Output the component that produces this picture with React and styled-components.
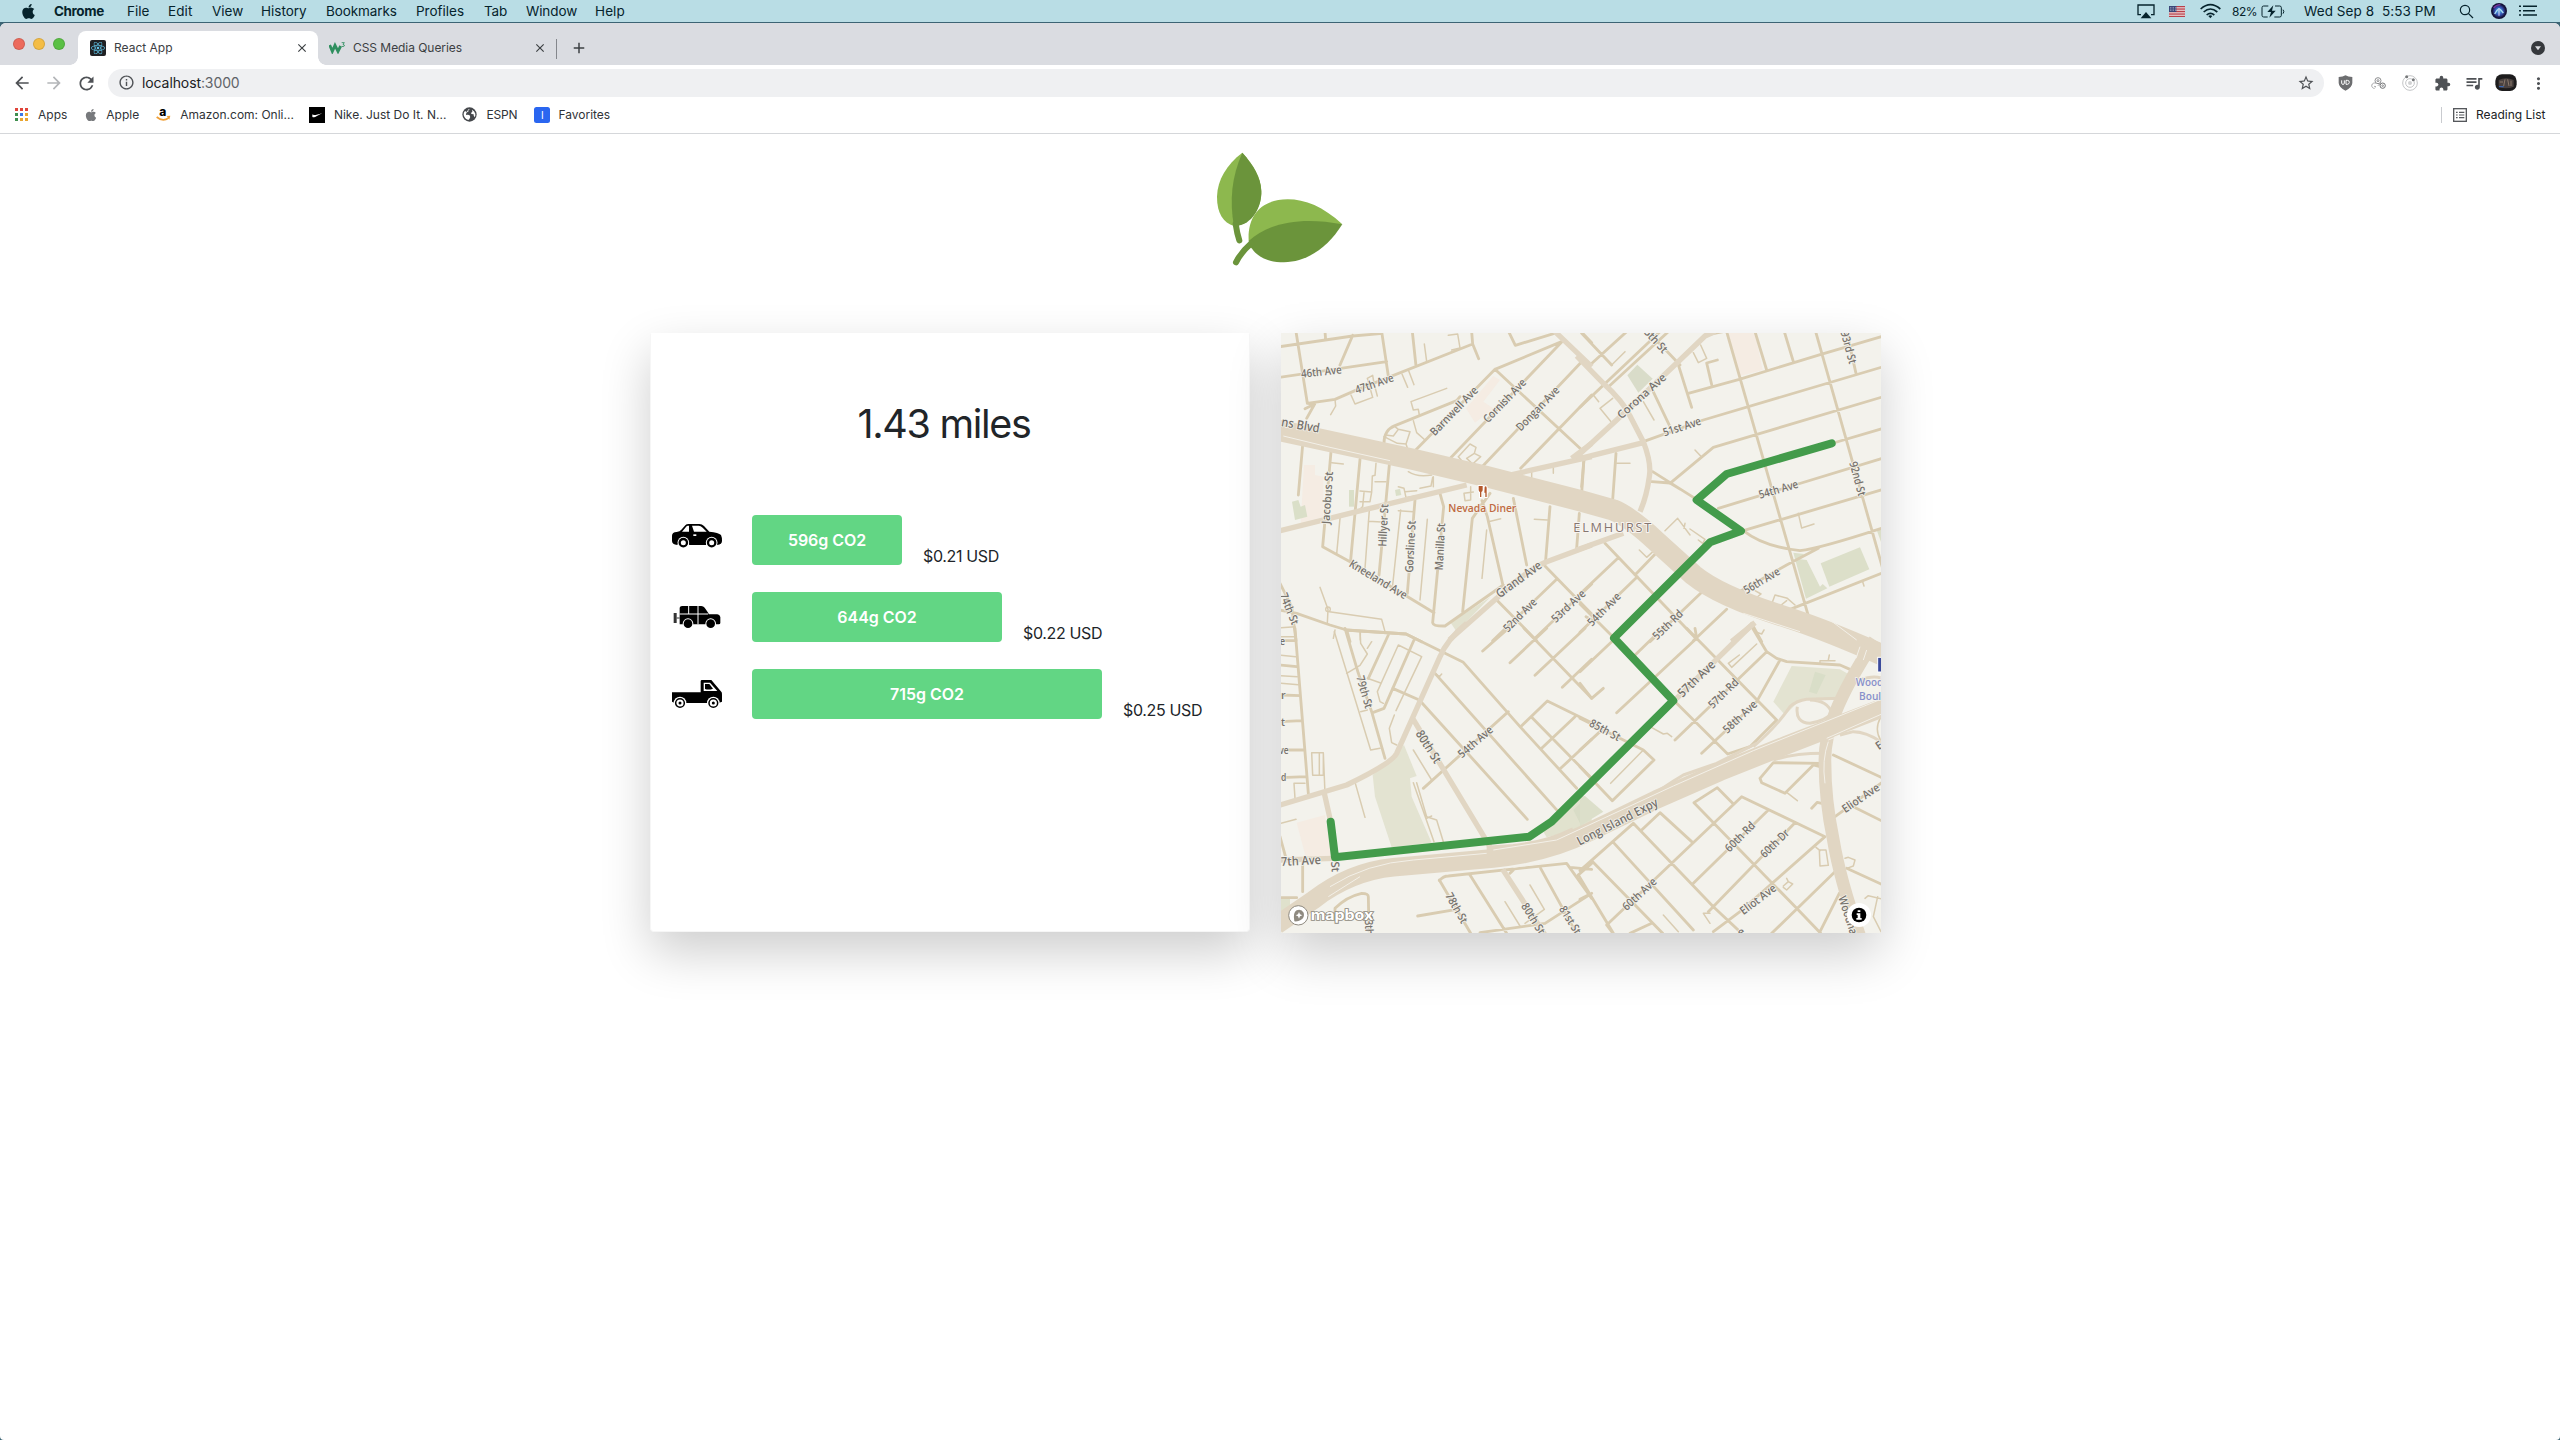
import React from "react";
import styled, { createGlobalStyle } from "styled-components";
import { FaApple, FaReact } from "react-icons/fa";
import {
  MdArrowBack, MdArrowForward, MdRefresh, MdInfoOutline, MdStarBorder,
  MdExtension, MdQueueMusic, MdMoreVert, MdClose, MdAdd,
} from "react-icons/md";

const Global = createGlobalStyle`
  * { box-sizing: border-box; }
  html, body { margin: 0; padding: 0; background: #3c6474; overflow: hidden; }
  body { font-family: Inter, Roboto, "Liberation Sans", sans-serif; color: #212529; }
  svg { display: block; flex: none; }
`;

const Screen = styled.div`
  width: 2560px;
  height: 1440px;
  display: flex;
  flex-direction: column;
`;

/* ---------- system menu bar ---------- */
const MenuBar = styled.header`
  height: 22px;
  margin-bottom: 1px;
  padding: 0 23px 0 21px;
  display: flex;
  align-items: center;
  background: #b9dde5;
  color: #06232c;
  font-size: 13.5px;
`;

const Word = styled.span`
  flex: none;
  min-width: ${(p) => p.$w}px;
  margin-left: ${(p) => p.$gap ?? 0}px;
  margin-right: ${(p) => p.$mr ?? 0}px;
  letter-spacing: ${(p) => p.$ls ?? 0}px;
  font-weight: ${(p) => p.$weight ?? 400};
  font-size: ${(p) => (p.$size ? p.$size + "px" : "inherit")};
  color: ${(p) => p.$color ?? "inherit"};
  white-space: pre;
`;

const MenuWord = styled(Word)`
  width: ${(p) => p.$w}px;
`;

const Slot = styled.span`
  flex: none;
  width: ${(p) => p.$w}px;
  margin-left: ${(p) => p.$gap ?? 0}px;
  display: flex;
  align-items: center;
  justify-content: center;
  color: ${(p) => p.$color ?? "inherit"};
`;

const Spacer = styled.div`
  flex: 1;
`;

/* ---------- browser window ---------- */
const Window = styled.div`
  flex: 1;
  min-height: 0;
  display: flex;
  flex-direction: column;
  background: #fff;
  border-radius: 6px 6px 4px 4px;
  overflow: hidden;
`;

const TabStrip = styled.div`
  height: 42px;
  padding: 8px 15px 0 13px;
  display: flex;
  background: #dadce1;
  color: #3c4043;
  font-size: 12px;
`;

const Lights = styled.div`
  width: 65px;
  height: 26px;
  display: flex;
  gap: 8px;
  align-items: center;
`;

const Light = styled.span`
  width: 12px;
  height: 12px;
  border-radius: 50%;
  background: ${(p) => p.$c};
  border: 1px solid rgba(0, 0, 0, 0.12);
`;

const Tab = styled.div`
  position: relative;
  width: ${(p) => p.$w}px;
  height: 34px;
  padding: 0 9px 1px ${(p) => p.$pl}px;
  display: flex;
  align-items: center;
  border-radius: 8px 8px 0 0;
  background: ${(p) => (p.$active ? "#fff" : "transparent")};
  &::before,
  &::after {
    content: ${(p) => (p.$active ? '""' : "none")};
    position: absolute;
    bottom: 0;
    width: 8px;
    height: 8px;
  }
  &::before {
    left: -8px;
    background: radial-gradient(circle at 0 0, transparent 7.5px, #fff 8px);
  }
  &::after {
    right: -8px;
    background: radial-gradient(circle at 100% 0, transparent 7.5px, #fff 8px);
  }
`;

const TabDivider = styled.span`
  width: 1px;
  height: 20px;
  margin: 8px 13px 0 0;
  background: #84878c;
`;

const StripButton = styled.span`
  height: 34px;
  display: flex;
  align-items: center;
`;

const Toolbar = styled.div`
  height: 36px;
  padding: 0 14px 0 13px;
  display: flex;
  align-items: center;
  color: #4f5256;
`;

const AddressBar = styled.div`
  width: 2216px;
  height: 28px;
  margin-left: 13px;
  padding: 0 9px 1px 10px;
  display: flex;
  align-items: center;
  border-radius: 14px;
  background: #eff0f2;
`;

const Bookmarks = styled.div`
  height: 33px;
  padding: 0 14px 5px 15px;
  display: flex;
  align-items: center;
  border-bottom: 1px solid #d5d7da;
  font-size: 12px;
  color: #303337;
`;

const BarDivider = styled.span`
  width: 1px;
  height: 16px;
  background: #c9cbcf;
`;

const Tile = styled.span`
  width: 16px;
  height: 16px;
  display: flex;
  align-items: center;
  justify-content: center;
  border-radius: ${(p) => p.$r ?? 0}px;
  background: ${(p) => p.$bg};
  color: ${(p) => p.$fg ?? "#fff"};
  font-size: 10px;
`;

/* ---------- page ---------- */
const Page = styled.main`
  flex: 1;
  display: flex;
  flex-direction: column;
`;

const Brand = styled.div`
  height: 199px;
  display: flex;
  justify-content: center;
`;

const Panels = styled.div`
  display: flex;
  align-items: flex-start;
  padding-left: 650px;
  gap: 31px;
`;

const Card = styled.section`
  width: 600px;
  height: 599px;
  padding-top: 62px;
  border: 1px solid #f6f6f6;
  border-top-color: #fff;
  border-radius: 2px 2px 4px 4px;
  background: #fff;
  box-shadow: 0 20px 50px rgba(0, 0, 0, 0.2);
`;

const MapCard = styled.section`
  width: 600px;
  height: 600px;
  background: #f3f2ec;
  box-shadow: 0 20px 50px rgba(0, 0, 0, 0.2);
`;

const Distance = styled.h1`
  margin: 0 0 62px;
  padding-right: 12px;
  font-size: 39.5px;
  font-weight: 400;
  line-height: 56px;
  letter-spacing: -1.3px;
  text-align: center;
  height: 57px;
`;

const Emission = styled.div`
  height: 50px;
  margin: 0 0 27px 21px;
  display: flex;
`;

const Bar = styled.div`
  width: ${(p) => p.$w}px;
  margin: 0 21px 0 30px;
  border-radius: 4px;
  background: #62d684;
  color: #fff;
  font-size: 16px;
  font-weight: 600;
  letter-spacing: -0.05px;
  line-height: 50px;
  text-align: center;
`;

const Price = styled.div`
  align-self: flex-end;
  font-size: 16px;
  line-height: 18px;
  letter-spacing: -0.35px;
  white-space: nowrap;
`;

/* ---------- drawings ---------- */
const Leaves = () => (
  <svg width="180" height="146" viewBox="0 12 540 438">
    <path d="M157 68C110 103 82 150 81 200C81 250 100 278 132 288C190 275 215 230 214 183C212 140 190 105 157 68Z" fill="#8db84e" />
    <path d="M157 68C190 105 212 140 214 183C215 230 190 275 150 286L132 290C118 210 125 140 157 68Z" fill="#6b943b" />
    <path d="M137 282Q141 310 148 331" stroke="#6b943b" strokeWidth="18" strokeLinecap="round" fill="none" />
    <path d="M457 283C400 230 345 208 293 208C215 208 172 255 176 332L184 355C250 330 350 310 457 283Z" fill="#8db84e" />
    <path d="M457 283C340 260 240 275 176 333L184 353C205 385 240 397 282 397C355 395 415 350 457 283Z" fill="#6b943b" />
    <path d="M138 397Q152 368 184 340" stroke="#6b943b" strokeWidth="18" strokeLinecap="round" fill="none" />
  </svg>
);

const Car = () => (
  <svg width="50" height="50" viewBox="0 0 150 150">
    <path d="M0 62Q0 52 14 51Q24 50 28 44L40 31Q43 27 50 27H82Q90 27 96 33L112 50Q140 52 147 60Q150 66 150 78Q150 88 136 90A19 19 0 0 0 102 90H52A19 19 0 0 0 16 90Q0 88 0 78Z" />
    <path d="M51 32H47Q44 32 40 38L30 50H51ZM60 32H80Q86 32 92 38L104 50H66Z" fill="#fff" />
    <rect x="64" y="58" width="9" height="5" fill="#fff" />
    {[34, 119].map((x) => (
      <g key={x}>
        <circle cx={x} cy="83" r="17.500" fill="#fff" />
        <circle cx={x} cy="83" r="14.500" />
        <circle cx={x} cy="83" r="7.500" fill="#fff" />
      </g>
    ))}
  </svg>
);

const Suv = () => (
  <svg width="50" height="50" viewBox="0 0 150 150">
    <path d="M23 47Q24 42 30 42H88Q94 42 98 47L109 63L110 67H136Q143 68 145 75V93Q145 97 140 97H130A16 16 0 0 0 102 97H62A16 16 0 0 0 34 97H23Z" />
    <rect x="5" y="63" width="9" height="30" fill="#333" />
    <path d="M14 78H23" stroke="#333" strokeWidth="3" />
    <path d="M23 66H108M50 42V66M78 42V97" stroke="#fff" strokeWidth="3" />
    {[48, 116].map((x) => (
      <g key={x}>
        <circle cx={x} cy="95" r="16" fill="#fff" />
        <circle cx={x} cy="95" r="13" />
      </g>
    ))}
  </svg>
);

const Truck = () => (
  <svg width="50" height="50" viewBox="0 0 150 150">
    <path d="M0 70H86V37Q86 33 90 33H118L149 70Q150 72 150 78V98L140 102H8L0 98Z" />
    <path d="M95 41H114L136 66H95Z" fill="#fff" />
    <path d="M99 45H112L123 59Q110 64 99 60Z" />
    {[24, 124].map((x) => (
      <g key={x}>
        <circle cx={x} cy="102" r="19" fill="#fff" />
        <circle cx={x} cy="102" r="13" fill="#fff" stroke="#000" strokeWidth="4.500" />
        <circle cx={x} cy="102" r="4.500" />
      </g>
    ))}
  </svg>
);

const Airplay = () => (
  <svg width="18" height="15" viewBox="0 0 54 45" fill="none" stroke="#06232c" strokeWidth="4">
    <path d="M12 32H3V3H51V32H42" />
    <path d="M27 24L43 43H11Z" fill="#06232c" stroke="none" />
  </svg>
);

const Flag = () => (
  <svg width="16" height="11" viewBox="0 0 48 33">
    <rect width="48" height="33" fill="#f4f0f0" />
    {[0, 1, 2, 3, 4, 5, 6].map((i) => <rect key={i} y={i * 5} width="48" height="2.8" fill="#b4343f" />)}
    <rect width="22" height="18" fill="#3a4678" />
    {[4, 9, 14].map((y) => [4, 9, 14, 19].map((x) => <circle key={x + "-" + y} cx={x} cy={y} r="1.2" fill="#fff" />))}
  </svg>
);

const Wifi = () => (
  <svg width="21" height="16" viewBox="0 0 63 48" fill="none" stroke="#06232c" strokeWidth="5">
    <path d="M2 18Q31 -8 61 18M11 27Q31 9 52 27M20 36Q31 26 43 36" />
    <path d="M31 46L25 39Q31 34 37 39Z" fill="#06232c" stroke="none" />
  </svg>
);

const Battery = () => (
  <svg width="24" height="13" viewBox="0 0 72 39" fill="none" stroke="#06232c" strokeWidth="3">
    <path d="M22 3H8Q3 3 3 8V31Q3 36 8 36H20M42 3H56Q61 3 61 8V31Q61 36 56 36H40M66 14Q71 20 66 26" />
    <path d="M37 1L19 21H30L25 38L44 17H33Z" fill="#06232c" stroke="none" />
  </svg>
);

const Search = () => (
  <svg width="15" height="15" viewBox="0 0 45 45" fill="none" stroke="#06232c" strokeWidth="3.6">
    <circle cx="18" cy="18" r="14" />
    <path d="M28 28L42 42" />
  </svg>
);

const Siri = () => (
  <svg width="16" height="16" viewBox="0 0 48 48">
    <defs>
      <radialGradient id="siri">
        <stop offset="0" stopColor="#4fc4ea" />
        <stop offset=".5" stopColor="#3550b4" />
        <stop offset=".85" stopColor="#141238" />
      </radialGradient>
    </defs>
    <circle cx="24" cy="24" r="24" fill="url(#siri)" />
    <path d="M11 33Q18 20 24 17Q30 20 37 30" stroke="#a9def2" strokeWidth="4" fill="none" />
    <path d="M24 18V38" stroke="#c9c0ea" strokeWidth="3.500" />
    <path d="M8 15Q16 5 28 5" stroke="#7c35a0" strokeWidth="4" fill="none" />
  </svg>
);

const ListGlyph = () => (
  <svg width="18" height="12" viewBox="0 0 54 36" stroke="#06232c" strokeWidth="4.5">
    <path d="M12 4H54M12 17H48M12 30H54M0 4H6M0 17H6M0 30H6" />
  </svg>
);

const W3 = () => (
  <svg width="16" height="12" viewBox="0 0 48 36" fill="none">
    <path d="M2 9L10 28L18 10L27 28L35 12" stroke="#2f8f5f" strokeWidth="8.500" />
    <path d="M38 2H46L42 7Q47 8 46 12Q43 15 38 13" stroke="#2f8f5f" strokeWidth="2.6" />
  </svg>
);

const AppsGrid = () => (
  <svg width="13" height="13" viewBox="0 0 39 39">
    {["#e0443a", "#e0443a", "#e0443a", "#3f8f4f", "#3b78e7", "#e9a52f", "#3f8f4f", "#e9a52f", "#e9a52f"].map((c, i) => (
      <rect key={i} x={(i % 3) * 15} y={Math.floor(i / 3) * 15} width="9" height="9" fill={c} />
    ))}
  </svg>
);

const Amazon = () => (
  <svg width="15" height="16" viewBox="0 0 45 48">
    <text x="20" y="26" textAnchor="middle" fontFamily="Inter, sans-serif" fontWeight="800" fontSize="36">a</text>
    <path d="M2 30Q20 45 38 33" stroke="#f0a038" strokeWidth="5" fill="none" />
    <path d="M32 27L43 26L40 38Z" fill="#f0a038" />
  </svg>
);

const Swoosh = () => (
  <svg width="12" height="6" viewBox="0 0 36 18"><path d="M6 5Q0 16 9 16Q14 15 34 3Q14 10 9 9Q5 9 6 5Z" fill="#fff" /></svg>
);

const Globe = () => (
  <svg width="15" height="15" viewBox="0 0 45 45">
    <circle cx="22.500" cy="22.500" r="21.500" fill="#45484c" />
    <path d="M24 6Q17 8 20 13L13 17L12 24Q20 22 24 26Q26 32 22 36L19 39Q8 36 5 24Q4 17 9 12L14 15L20 6ZM30 8Q38 12 40 20Q41 26 38 31Q34 26 35 22L28 21Q25 17 31 15Z" fill="#fff" />
  </svg>
);

const Shield = () => (
  <svg width="15" height="16" viewBox="0 0 45 48">
    <path d="M22.500 1Q30 6 43 6V24Q42 38 22.500 47Q3 38 2 24V6Q15 6 22.500 1Z" fill="#6d6e70" />
    <path d="M11 16V25Q11 28 15 28Q19 28 19 25V16M24 16V28H28Q34 27 34 22Q34 16 28 16Z" fill="none" stroke="#fff" strokeWidth="3" />
  </svg>
);

const Rings = () => (
  <svg width="16" height="12" viewBox="0 0 48 36" fill="none" stroke="#8d8e90" strokeWidth="3">
    <circle cx="24" cy="11" r="9" /><circle cx="24" cy="11" r="3" />
    <path d="M17 19A8 8 0 1 0 14 34" stroke="#a5a6a8" /><circle cx="38" cy="26" r="8" stroke="#6f7072" /><circle cx="38" cy="26" r="2.500" />
    <path d="M13 28L18 30M24 26L31 19" />
  </svg>
);

const Orbit = () => (
  <svg width="16" height="16" viewBox="0 0 48 48" fill="none" stroke="#c4c5c7" strokeWidth="3">
    <circle cx="24" cy="24" r="22" /><circle cx="24" cy="24" r="13" />
    <circle cx="24" cy="24" r="6" fill="#d0d1d3" stroke="none" />
    <circle cx="14" cy="5" r="4.500" fill="#77797b" stroke="none" /><circle cx="34" cy="14" r="4.500" fill="#77797b" stroke="none" />
  </svg>
);

const Avatar = () => (
  <svg width="22" height="18" viewBox="0 0 66 54">
    <rect x="1" y="1" width="64" height="50" rx="20" fill="#1d1c1d" />
    <path d="M11 18Q33 8 56 18V38Q33 48 11 38Z" fill="#4a4240" />
    <path d="M14 24H24M30 16L26 36M38 16L42 36M48 20V36" stroke="#8c7a6c" strokeWidth="3" />
    <path d="M12 38H26" stroke="#3b66b0" strokeWidth="4" />
  </svg>
);

const ReadingIcon = () => (
  <svg width="14" height="14" viewBox="0 0 42 42" fill="none" stroke="#55585c" strokeWidth="4">
    <rect x="2" y="2" width="38" height="38" />
    <path d="M9 13H14M18 13H34M9 21H14M18 21H34M9 29H14M18 29H34" strokeWidth="3.600" />
  </svg>
);

const TabSearch = () => (
  <svg width="14" height="14" viewBox="0 0 42 42">
    <circle cx="21" cy="21" r="21" fill="#35383c" />
    <path d="M12 16H30L21 28Z" fill="#dadce1" />
  </svg>
);

/* ---------- map data: four tiles, each drawn from its own origin ---------- */
const tiles = [
  {
    at: "0 0",
    land: [
      ["M580 210L640 138L660 150L610 215L640 235L585 278L558 235Z", "#f5ece3"],
      ["M72 405H105V435L130 440V560L62 580Z", "#f5ece3"],
      ["M36 515L55 510L62 530L75 525L82 560L45 570Z", "#dadfc8"],
      ["M207 480H222V530H207Z", "#dadfc8"],
      ["M345 480L360 476L364 495L348 498Z", "#dadfc8"],
      ["M512 878L632 800L530 905Z", "#e2e2cf"],
    ],
    thin:
      "M165 208L167 228L152 254M433 42L440 94M505 16L533 12L540 54L515 60M366 132L383 172M386 122L402 164M213 195L225 222L278 202L262 145L278 136L282 160L292 198M500 175L393 215L400 240L415 238L418 255M312 320L352 340L378 342L390 305L355 298L340 318L322 316M400 272L410 308L435 330M378 342L384 360M355 298L345 290M535 380L570 342L588 352L583 370L602 380L578 402L560 385L583 370M535 380L548 395L570 405M155 398L190 402M288 400L285 436L277 438L275 486L240 483M285 455H318M275 486L270 515H240M252 488L248 530L225 552M355 470L372 475L378 503L405 498M375 485L410 482M420 475L453 468L458 442M385 425Q410 442 455 435M180 565L170 672M268 540L255 715M265 574L318 577M362 540L338 765M355 542L400 545M442 568L420 810M620 600L606 745M572 470V510L555 512L552 490L580 486M608 520L585 530M625 575L662 566M763 568L802 570M755 425V450M820 410V430M120 772L144 838L142 880M148 845L305 868L315 905M165 900L160 925M241 905V930M3 893L45 890M3 920H45M460 440V470",
    minor:
      "M0 50L218 18L300 11M48 5L82 220L104 222L80 265M104 222L75 236M135 5L137 30M218 16L180 105M0 142L320 95M305 5L325 138M397 5L408 108M82 220L165 208L225 182L578 42L596 86M575 5L578 42M686 5L706 46L840 5M405 362L645 118L845 35M645 118L908 362M508 388L845 36M605 412L905 95M722 415L935 195M910 12L935 38M68 345L55 495M153 365L128 650L210 695L462 848M240 388L212 690M328 405L297 735M405 510L382 790M480 490L491 530L458 878Q460 889 495 888L670 765M312 340Q312 300 345 287L530 212L540 200M630 490L577 565L548 845M606 512L622 560L668 762M700 505L740 705M810 530L797 690M912 385L905 470M898 550L890 655M795 708L935 852M638 932L830 748M648 808L770 932M765 925L935 762M0 760L35 830L48 932M0 840L50 850L150 885L200 900L378 912L425 935M200 900L210 935M918 860L935 870",
    major: "M0 602L230 545L560 465M690 435L935 380M508 930L650 805Q740 720 800 695L935 645M825 5L935 110M875 385L935 340",
  },
  {
    at: "900 0",
    land: [
      ["M445 9H525L548 120L480 138Z", "#f5ece3"],
      ["M172 104L218 146L175 188L142 136Z", "#d9dcc9"],
      ["M722 700L840 652L868 718L748 770Z", "#dcdfc9"],
      ["M640 668L672 672L660 688L680 690L720 770L728 762L742 775L678 806Z", "#dcdfc9"],
      ["M890 600H910V655Z", "#dcdfc9"],
    ],
    thin:
      "M190 215L222 270M40 195L56 215M98 205L60 235L92 274M340 68L355 98L380 85L362 45M95 105L135 65M345 360L362 378M110 400H150M178 660L200 682L222 662M255 602L293 565L330 615M315 580L312 595M330 597L375 628L368 640L355 630M655 550L665 594L702 582M572 830L585 795L622 805L645 825M572 830L600 828L620 812M525 782L543 792L520 810M848 755L852 768",
    minor:
      "M190 335L370 270L910 110M325 190L478 148L723 73L910 18M270 460L400 352L910 200M750 342L910 295M415 535L910 384M490 602L910 478M490 602Q550 650 660 662Q720 655 910 593M470 790L620 705L715 655M440 5L690 875M707 5L908 715M525 5L560 120M613 5L640 95M800 5L828 130M292 95L335 232M412 90L380 99L396 168M600 850L910 728M0 232L240 5M30 105L140 5M88 168L265 5M5 10L95 105M205 5L300 105M218 425L345 505M215 455L270 459L300 477M215 175L270 290M12 385L5 490M108 370L98 510M75 640L350 928M0 792L115 683M165 735L235 662M0 907L172 740M0 822L100 922M340 932L440 838M362 790L210 935M515 880L545 935M700 885L760 900L840 930M345 505L480 595M375 15L430 5",
    major: "M-10 388L190 338M-10 380L110 270L300 90L375 18L405 5M-10 78L70 160Q130 215 150 258L190 335Q215 400 208 440Q200 500 180 545M-10 660L130 610M455 935L525 878",
  },
  {
    at: "0 900",
    land: [
      ["M278 435L372 345L410 438L390 445L395 500L455 638L335 652L285 500Z", "#e3e3d1"],
      ["M50 578L135 555L155 685H78Z", "#f5ece3"],
      ["M790 605L905 490L935 540V588L800 622Z", "#e1e2ce"],
      ["M880 540L905 515L930 545V570L900 580Z", "#d8dcc6"],
      ["M0 805H30V840L0 845Z", "#dfe1cc"],
    ],
    thin:
      "M163 5L272 360L300 355M240 5L242 40L262 72L240 106L200 130M262 55L275 35M262 145L300 158M425 80L348 242M355 45L425 80M355 45L292 185L300 215L310 220M343 255L328 295L335 338L350 345M242 245L262 240M400 360L455 450M95 368H130V436H98ZM118 368V436M130 370L135 490M45 505L42 460H75M400 458L462 635M410 458L440 560L470 570L490 635M440 565L455 558M465 130L478 140L485 132M3 580L48 568M226 460L255 562M750 765L793 838L735 880M675 815L720 888M3 76L47 80M3 137L52 140M3 160L55 164",
    minor:
      "M45 -5L85 490M0 32H45M0 105L50 110M0 195L60 197M0 275L65 272M0 360L72 360M0 443L78 440M195 -5L235 130L275 245L315 385M325 15L265 145M402 30L312 235L278 248M195 0L378 12L550 97L720 290L890 475M465 130L832 542M338 175L418 210L742 568M430 475L685 245M608 63L685 -5M690 98L800 -5M765 136L915 -5M847 172L935 88M732 -5L935 205M722 290L802 213L935 278M785 355L885 260M755 262L935 445M842 415L935 328M0 620L18 685M68 700V785M3 803H50M478 752Q490 738 505 738L860 700L935 805M478 750L572 910M570 735L680 910M782 715L892 915M413 858L530 838M600 908L795 880L935 790M165 870V835Q200 800 245 790Q265 790 265 800L267 905M690 730L700 720M870 712L935 718M895 735L935 700",
    major: "M0 525L200 465Q335 400 350 370L480 80Q500 30 560 -20M398 265L630 650M133 490L160 610M0 690L160 685M668 718L795 915M0 865L60 820L200 745M620 655L700 650Q800 640 880 600",
  },
  {
    at: "900 900",
    land: [
      ["M635 108L780 118L810 135L775 205L660 210L615 255L580 215Z", "#e3e3d1"],
      ["M705 125L737 135L710 192L687 185Z", "#d9dec8"],
      ["M0 500L15 498L70 545L0 588Z", "#dcdfca"],
    ],
    thin:
      "M190 360L92 460M210 290L250 312L262 310L275 320M530 42L455 112L445 100L478 75M525 5L545 12L552 0M748 75L745 90M765 92H720V98M620 487L652 512M718 660H738L745 706L720 708ZM708 652L720 662M795 685L805 682L825 690L820 708L800 715M610 768L625 755L638 762L620 780L610 772M620 745L625 755M390 850L370 850L390 880M250 855L295 905M855 805L865 797L910 808M893 800L880 860L903 905M903 260Q880 300 905 335",
    minor:
      "M345 -5L350 25L110 248M560 65L285 330M600 90L530 215M518 -5L560 65L590 85L620 95L780 105L810 118M320 -5L590 270L510 350L443 372L290 220M530 215L365 370M160 80L248 -5M0 125L95 35M0 265L190 360L222 390L97 512L0 410M0 160L35 205L70 175M0 360L60 305M342 518L412 473L458 520M342 518L650 835L722 910M0 722L160 580L400 830L485 910M185 600L240 548L335 635M80 885L485 500L735 620L480 845L400 905M340 760L565 540M385 845L645 578M575 910L765 725M98 635L340 900M38 695L248 910M-5 735L100 910M0 808L25 795M720 905L778 790M80 885L95 905M150 910L215 880M760 375L910 445M765 560L910 455M820 530L910 575M800 715L910 765M540 445L580 398L720 400M540 445L545 458L615 490L700 405M695 535L712 517L725 520M700 405L720 410",
    major: "M515 -15L290 205",
  },
];

const expressway = "M-10 1785L100 1710Q210 1625 340 1612L640 1585Q800 1570 930 1505L1130 1408L1320 1325L1520 1245L1830 1125";
const boulevard = "M-10 300L400 388L620 440L900 512L1000 540Q1050 560 1130 635L1240 735Q1320 800 1520 862Q1640 900 1830 985";
const parkway = "M1785 930Q1700 1060 1665 1150Q1632 1230 1635 1300Q1635 1410 1660 1530Q1680 1650 1740 1820";
const route = "M1655 340L1340 432L1250 510L1383 603L1290 637L1002 924L1180 1112L815 1475L748 1520L165 1582L152 1475";

const streets = [
  ["46th Ave", 124, 125, -6, 122], ["47th Ave", 283, 161, -19, 120], ["ns Blvd", 62, 285, 10, 116, 38],
  ["Barnwell Ave", 522, 243, -46, 190], ["Cornish Ave", 674, 212, -46, 168], ["Dongan Ave", 773, 236, -46, 170],
  ["Jacobus St", 142, 503, -86, 158], ["Hillyer St", 310, 586, -87, 128], ["Gorsline St", 391, 650, -87, 156],
  ["Manilla St", 480, 650, -87, 142], ["Kneeland Ave", 295, 748, 31, 196], ["Grand Ave", 716, 748, -36, 160, 37],
  ["52nd Ave", 720, 855, -45, 126], ["53rd Ave", 865, 828, -43, 126], ["74th St", 28, 836, 68, 100],
  ["5th St", 1128, 32, 48, 86], ["Corona Ave", 1085, 198, -42, 184], ["51st Ave", 1206, 290, -18, 118],
  ["93rd St", 1706, 52, 75, 100], ["92nd St", 1733, 446, 75, 106], ["54th Ave", 1495, 478, -16, 122],
  ["56th Ave", 1445, 752, -31, 120], ["54th Ave", 972, 838, -45, 126], ["55th Rd", 1163, 884, -44, 112],
  ["79th St", 254, 1086, 74, 100], ["80th St", 446, 1250, 58, 110, 37], ["54th Ave", 586, 1235, -41, 126],
  ["7th Ave", 63, 1592, -3, 120, 37], ["St", 166, 1610, 86, 32], ["78th St", 530, 1734, 60, 100],
  ["80th St", 760, 1766, 58, 104], ["81st St", 871, 1770, 58, 92], ["13th", 267, 1784, 88, 62],
  ["57th Ave", 1249, 1046, -44, 140, 37], ["57th Rd", 1330, 1090, -44, 112], ["58th Ave", 1380, 1160, -43, 126],
  ["85th St", 975, 1200, 28, 100], ["Long Island Expy", 1012, 1475, -27, 268, 37], ["60th Rd", 1380, 1520, -45, 112],
  ["60th Dr", 1484, 1540, -44, 106], ["60th Ave", 1078, 1692, -43, 126], ["Eliot Ave", 1434, 1708, -37, 126],
  ["Eliot Ave", 1742, 1404, -34, 128], ["Woodhaven", 1712, 1780, 72, 170], ["r", 10, 1094, 0, 14], ["t", 9, 1175, 0, 12],
  ["ve", 12, 1260, 0, 28], ["d", 11, 1342, 0, 16], ["e", 7, 932, 0, 16], ["E", 1797, 1246, -34, 18], ["e", 1383, 1806, -30, 20],
];

const Label = ({ t, x, y, a, len, size = 34 }) => (
  <text
    transform={`translate(${x} ${y}) rotate(${a})`} dy="0.35em" textAnchor="middle"
    textLength={len} lengthAdjust="spacingAndGlyphs" fontSize={size}
    fill="#77736d" stroke="#f3f2ec" strokeWidth="5" strokeLinejoin="round" paintOrder="stroke"
  >
    {t}
  </text>
);

const RouteMap = () => (
  <svg width="600" height="600" viewBox="3 9 1800 1800" fill="none" fontFamily='"Open Sans", "Noto Sans", sans-serif' fontWeight="600">
    <rect x="0" y="0" width="1830" height="1830" fill="#f3f2ec" />
    {tiles.map((t) => (
      <g key={t.at} transform={`translate(${t.at})`}>
        {t.land.map(([d, c]) => <path key={d} d={d} fill={c} />)}
      </g>
    ))}
    <g stroke="#d9ccb1" strokeLinejoin="round" strokeLinecap="round">
      {tiles.map((t) => (
        <g key={t.at} transform={`translate(${t.at})`}>
          <path d={t.thin} strokeWidth="4.500" />
          <path d={t.minor} strokeWidth="8.500" />
        </g>
      ))}
      <circle cx="144" cy="838" r="7" strokeWidth="4" />
    </g>
    <g stroke="#e1d6c3" strokeLinejoin="round">
      {tiles.map((t) => <path key={t.at} transform={`translate(${t.at})`} d={t.major} strokeWidth="16" />)}
      <path d="M1070 1430Q1150 1370 1210 1335L1310 1300L1430 1240M1420 1250Q1490 1190 1530 1130Q1550 1112 1580 1108L1680 1105M1480 1290Q1540 1270 1630 1270M1680 1215L1720 1205Q1760 1205 1810 1240M1552 1130Q1545 1178 1590 1180Q1640 1170 1655 1150Q1645 1112 1590 1110M1740 1050Q1780 1035 1805 1045" strokeWidth="9" />
      <path d={boulevard} strokeWidth="64" />
      <path d={expressway} strokeWidth="56" />
      <path d={parkway} strokeWidth="38" />
    </g>
    <g stroke="#f3f0e8" strokeWidth="3">
      <path d="M10 318L150 352L330 392M150 1670Q260 1600 400 1590L620 1570M145 1700L240 1640M640 1560L830 1530L1180 1368L1420 1262L1810 1105M1390 850L1560 905M1650 870L1730 930M1740 950L1728 985M1760 960L1750 990M1645 1230L1670 1220M1635 1360Q1625 1290 1645 1235M700 1612L860 1590M1640 1225L1810 1150" />
    </g>
    {streets.map(([t, x, y, a, len, size], i) => <Label key={i} t={t} x={x} y={y} a={a} len={len} size={size} />)}
    <path d={route} stroke="#439b4b" strokeWidth="24" strokeLinejoin="round" strokeLinecap="round" />
    <text x="997" y="605" textAnchor="middle" fontSize="38" fontWeight="400" textLength="234" fill="#857670" stroke="#f8f4f0" strokeWidth="6" paintOrder="stroke">ELMHURST</text>
    <text x="607" y="545" textAnchor="middle" fontSize="33" textLength="204" lengthAdjust="spacingAndGlyphs" fill="#bf6a42" stroke="#f3f2ec" strokeWidth="5" paintOrder="stroke">Nevada Diner</text>
    <g stroke="#fff" strokeWidth="6" paintOrder="stroke" fill="#b4592c">
      <path d="M596 468H608V480Q608 485 604 486V501H600V486Q596 485 596 480ZM614 470Q620 466 620 474V501H616V488H613Z" />
    </g>
    <rect x="1793" y="982" width="20" height="44" fill="#3b4a9b" stroke="#fff" strokeWidth="3" />
    <g fill="#8790ca" fontSize="33" stroke="#f3f2ec" strokeWidth="4" paintOrder="stroke">
      <text x="1727" y="1067" textLength="170" lengthAdjust="spacingAndGlyphs">Woodhaven</text>
      <text x="1737" y="1110" textLength="150" lengthAdjust="spacingAndGlyphs">Boulevard</text>
    </g>
    <circle cx="55" cy="1756" r="29" fill="#fff" stroke="#8f8a80" strokeWidth="3" />
    <path d="M43 1774Q38 1748 50 1741Q64 1736 71 1748Q75 1762 62 1770Q55 1775 43 1774Z" fill="#8f8a80" />
    <path d="M57 1746L60 1753L67 1756L60 1759L57 1766L54 1759L47 1756L54 1753Z" fill="#fff" />
    <text x="92" y="1771" fontSize="43" fontWeight="700" fontFamily="Inter, sans-serif" textLength="188" lengthAdjust="spacingAndGlyphs" fill="#fff" stroke="#8f8a80" strokeWidth="5" paintOrder="stroke">mapbox</text>
    <circle cx="1737" cy="1755" r="36" fill="#fff" />
    <circle cx="1737" cy="1755" r="22" fill="#000" />
    <path d="M1733 1741H1741V1746H1733ZM1730 1750H1741V1764H1745V1769H1729V1764H1733V1755H1730Z" fill="#fff" />
  </svg>
);

const menus = [
  ["Chrome", 54, 19, 700, -0.4], ["File", 22, 19, 400, 0], ["Edit", 25, 19, 400, 0.1], ["View", 30, 19, 400, 0],
  ["History", 46, 19, 400, 0], ["Bookmarks", 71, 19, 400, -0.1], ["Profiles", 49, 19, 400, 0],
  ["Tab", 22, 19, 400, -0.2], ["Window", 51, 20, 400, -0.1], ["Help", 29, 18, 400, 0.1],
];

const emissions = [
  { icon: <Car />, grams: 596, width: 150, price: "$0.21 USD" },
  { icon: <Suv />, grams: 644, width: 250, price: "$0.22 USD" },
  { icon: <Truck />, grams: 715, width: 350, price: "$0.25 USD" },
];

export default function App() {
  return (
    <Screen>
      <Global />
      <MenuBar>
        <Slot $w={14}><FaApple size={17} /></Slot>
        {menus.map(([t, w, gap, weight, ls]) => (
          <MenuWord key={t} $w={w} $gap={gap} $weight={weight} $ls={ls}>{t}</MenuWord>
        ))}
        <Spacer />
        <Slot $w={18}><Airplay /></Slot>
        <Slot $w={16} $gap={14}><Flag /></Slot>
        <Slot $w={21} $gap={15}><Wifi /></Slot>
        <Word $w={25} $gap={11} $size={12} $ls={-0.5}>82%</Word>
        <Slot $w={24} $gap={4}><Battery /></Slot>
        <Word $w={132} $gap={19} $ls={0.08}>{"Wed Sep 8  5:53 PM"}</Word>
        <Slot $w={15} $gap={23}><Search /></Slot>
        <Slot $w={16} $gap={17}><Siri /></Slot>
        <Slot $w={18} $gap={12}><ListGlyph /></Slot>
      </MenuBar>
      <Window>
        <TabStrip>
          <Lights><Light $c="#ec6a5c" /><Light $c="#f4bd46" /><Light $c="#5ac045" /></Lights>
          <Tab $w={240} $pl={12} $active>
            <Tile $r={2} $bg="#202124" $fg="#61c4e8"><FaReact size={14} /></Tile>
            <Word $w={60} $gap={8}>React App</Word>
            <Spacer />
            <MdClose size={14} />
          </Tab>
          <Tab $w={238} $pl={11}>
            <W3 />
            <Word $w={110} $gap={8} $ls={-0.05}>CSS Media Queries</Word>
            <Spacer />
            <MdClose size={14} />
          </Tab>
          <TabDivider />
          <StripButton><MdAdd size={18} /></StripButton>
          <Spacer />
          <StripButton><TabSearch /></StripButton>
        </TabStrip>
        <Toolbar>
          <Slot $w={18}><MdArrowBack size={20} /></Slot>
          <Slot $w={18} $gap={14} $color="#b4b6b9"><MdArrowForward size={20} /></Slot>
          <Slot $w={18} $gap={14}><MdRefresh size={21} /></Slot>
          <AddressBar>
            <MdInfoOutline size={17} />
            <Word $gap={7} $size={14} $color="#202124" $ls={-0.1}>localhost</Word>
            <Word $size={14} $color="#5f6368" $ls={-0.1}>:3000</Word>
            <Spacer />
            <MdStarBorder size={18} />
          </AddressBar>
          <Slot $w={15} $gap={14}><Shield /></Slot>
          <Slot $w={16} $gap={17}><Rings /></Slot>
          <Slot $w={16} $gap={16}><Orbit /></Slot>
          <Slot $w={16} $gap={16}><MdExtension size={17} /></Slot>
          <Slot $w={16} $gap={16}><MdQueueMusic size={20} /></Slot>
          <Slot $w={22} $gap={13}><Avatar /></Slot>
          <Slot $w={16} $gap={13}><MdMoreVert size={19} /></Slot>
        </Toolbar>
        <Bookmarks>
          <Slot $w={13}><AppsGrid /></Slot>
          <Word $w={29} $gap={10}>Apps</Word>
          <Slot $w={12} $gap={18} $color="#77797c"><FaApple size={14} /></Slot>
          <Word $w={33} $gap={9}>Apple</Word>
          <Slot $w={15} $gap={17}><Amazon /></Slot>
          <Word $w={113} $gap={9}>Amazon.com: Onli...</Word>
          <Slot $w={16} $gap={15}><Tile $bg="#000"><Swoosh /></Tile></Slot>
          <Word $w={112} $gap={9}>Nike. Just Do It. N...</Word>
          <Slot $w={14} $gap={16}><Globe /></Slot>
          <Word $w={32} $gap={10} $ls={-0.15}>ESPN</Word>
          <Slot $w={16} $gap={16}><Tile $bg="#2a66f0" $r={2.5}>I</Tile></Slot>
          <Word $w={52} $gap={8}>Favorites</Word>
          <Spacer />
          <BarDivider />
          <Slot $w={14} $gap={11}><ReadingIcon /></Slot>
          <Word $w={70} $gap={9} $color="#202124">Reading List</Word>
        </Bookmarks>
        <Page>
          <Brand><Leaves /></Brand>
          <Panels>
            <Card>
              <Distance>1.43 miles</Distance>
              {emissions.map((e) => (
                <Emission key={e.grams}>
                  {e.icon}
                  <Bar $w={e.width}>{e.grams}g CO2</Bar>
                  <Price>{e.price}</Price>
                </Emission>
              ))}
            </Card>
            <MapCard><RouteMap /></MapCard>
          </Panels>
        </Page>
      </Window>
    </Screen>
  );
}
